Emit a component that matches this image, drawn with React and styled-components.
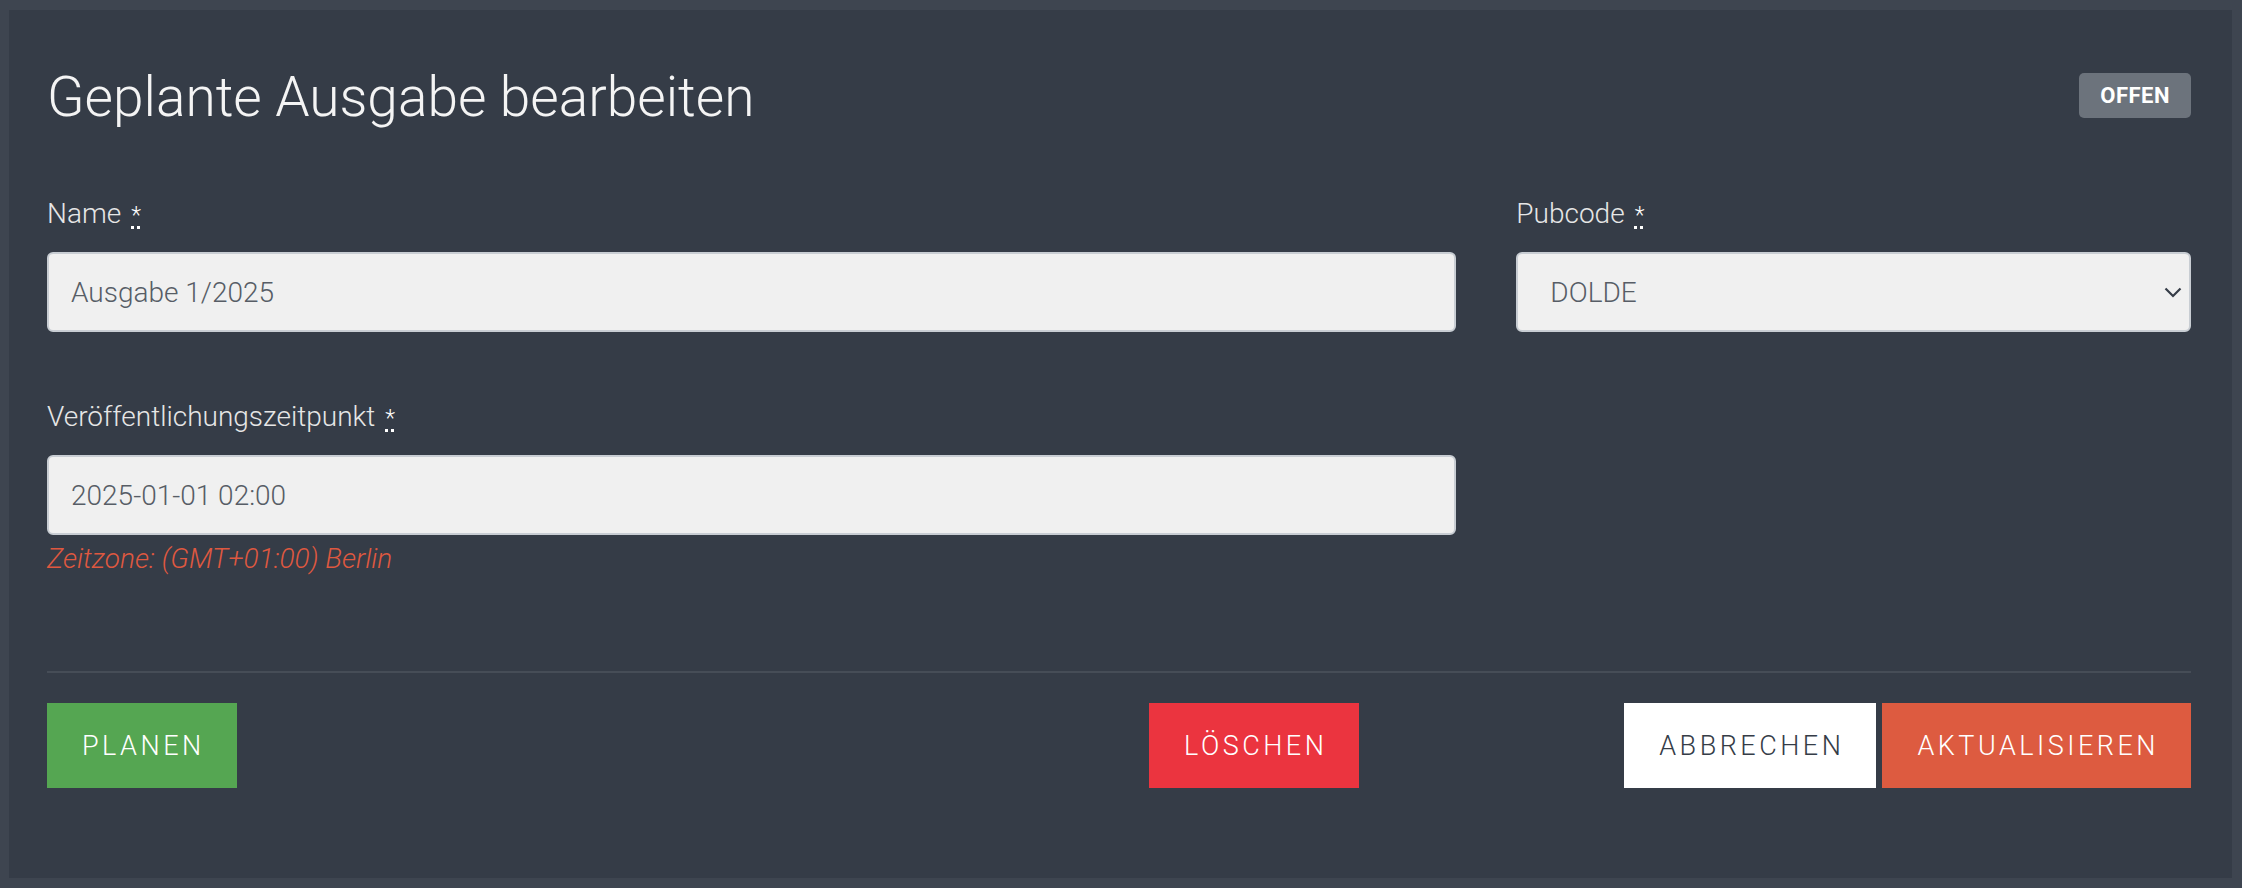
import React from 'react';
import styled, { createGlobalStyle } from 'styled-components';

const GlobalStyle = createGlobalStyle`
  * {
    box-sizing: border-box;
  }
  body {
    margin: 0;
    background: #3e4550;
    font-family: Roboto, "Liberation Sans", sans-serif;
  }
`;

const Page = styled.div`
  padding: 10px 10px 10px 9px;
`;

const Panel = styled.div`
  background: #353c47;
  padding: 54px 41px 90px 38px;
`;

const Header = styled.div`
  display: flex;
  justify-content: space-between;
  align-items: center;
`;

const Title = styled.h1`
  margin: 0;
  font-size: 55px;
  font-weight: 300;
  line-height: 1.2;
  color: #f4f4f4;
`;

const Badge = styled.span`
  display: inline-flex;
  align-items: center;
  height: 45px;
  padding: 0 21px;
  margin-top: -4px;
  border-radius: 5px;
  background: #6c737c;
  color: #ffffff;
  font-size: 22px;
  font-weight: 700;
  letter-spacing: 0.5px;
`;

const Row = styled.div`
  display: grid;
  grid-template-columns: calc((100% + 60px) * 2 / 3 - 60px) 1fr;
  column-gap: 60px;
  margin-top: ${({ $top }) => $top}px;
`;

const Field = styled.div`
  display: flex;
  flex-direction: column;
`;

const Label = styled.label`
  font-size: 28px;
  font-weight: 300;
  line-height: 42px;
  color: #e6e6e6;
  margin-bottom: 15px;
`;

const Req = styled.abbr`
  margin-left: 10px;
  font-size: 23px;
  color: #ffffff;
  text-decoration: underline dotted;
  text-decoration-thickness: 3px;
  text-underline-offset: 3px;
  cursor: help;
`;

const Input = styled.input`
  height: 80px;
  width: 100%;
  padding: 0 22px;
  border: 2px solid #c8cdd3;
  border-radius: 6px;
  background: #f0f0f0;
  color: #575d66;
  font-family: inherit;
  font-size: 28px;
  font-weight: 300;
  outline: none;
`;

const SelectWrap = styled.div`
  position: relative;
`;

const Select = styled.select`
  appearance: none;
  height: 80px;
  width: 100%;
  padding: 0 50px 0 32px;
  border: 2px solid #c8cdd3;
  border-radius: 6px;
  background: #f0f0f0;
  color: #575d66;
  font-family: inherit;
  font-size: 28px;
  font-weight: 300;
  outline: none;
`;

const Chevron = styled.svg`
  position: absolute;
  right: 9px;
  top: 35px;
  pointer-events: none;
`;

const Hint = styled.div`
  margin-top: 4px;
  font-size: 28px;
  font-style: italic;
  font-weight: 300;
  line-height: 1.4;
  color: #de5840;
`;

const Divider = styled.hr`
  margin: 93px 0 30px;
  border: none;
  border-top: 2px solid #464d57;
`;

const Footer = styled.div`
  display: grid;
  grid-template-columns: 1fr 1fr;
  column-gap: 60px;
`;

const Actions = styled.div`
  display: flex;
  gap: 6px;
`;

const Spacer = styled.div`
  flex: 1;
`;

const Button = styled.button`
  height: 85px;
  padding: 0 32px 0 35px;
  border: none;
  border-radius: 0;
  background: ${({ $bg }) => $bg};
  color: ${({ $fg }) => $fg || '#ffffff'};
  font-family: inherit;
  font-size: 27px;
  font-weight: 300;
  letter-spacing: 3.5px;
  text-transform: uppercase;
  cursor: pointer;
`;

export default function App() {
  return (
    <>
      <GlobalStyle />
      <Page>
        <Panel>
          <Header>
            <Title>Geplante Ausgabe bearbeiten</Title>
            <Badge>OFFEN</Badge>
          </Header>

          <Row $top={63}>
            <Field>
              <Label>
                Name<Req title="required">*</Req>
              </Label>
              <Input defaultValue="Ausgabe 1/2025" />
            </Field>
            <Field>
              <Label>
                Pubcode<Req title="required">*</Req>
              </Label>
              <SelectWrap>
                <Select defaultValue="DOLDE">
                  <option value="DOLDE">DOLDE</option>
                </Select>
                <Chevron width="18" height="11" viewBox="0 0 18 11">
                  <path d="M1.5 1.5 L9 9 L16.5 1.5" fill="none" stroke="#353c47" strokeWidth="2.2" />
                </Chevron>
              </SelectWrap>
            </Field>
          </Row>

          <Row $top={64}>
            <Field>
              <Label>
                Veröffentlichungszeitpunkt<Req title="required">*</Req>
              </Label>
              <Input defaultValue="2025-01-01 02:00" />
              <Hint>Zeitzone: (GMT+01:00) Berlin</Hint>
            </Field>
          </Row>

          <Divider />

          <Footer>
            <div>
              <Button $bg="#55a652">Planen</Button>
            </div>
            <Actions>
              <Button $bg="#eb343f">Löschen</Button>
              <Spacer />
              <Button $bg="#ffffff" $fg="#353c47">Abbrechen</Button>
              <Button $bg="#dd5b40">Aktualisieren</Button>
            </Actions>
          </Footer>
        </Panel>
      </Page>
    </>
  );
}
